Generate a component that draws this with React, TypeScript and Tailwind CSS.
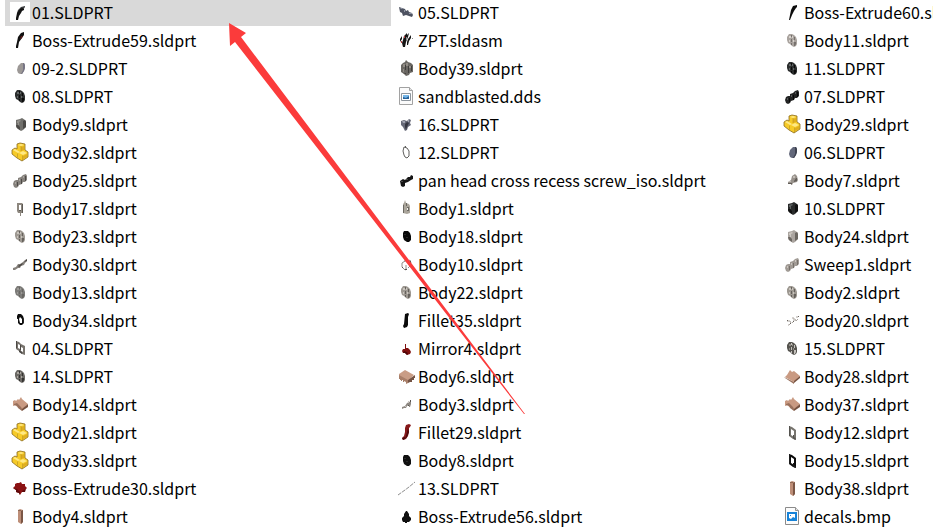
import type { ReactNode } from "react";

type Entry = { name: string; icon: ReactNode; selected?: boolean };

type Shape = [fill: string, d: string];

function Thumb({ shapes }: { shapes: Shape[] }) {
  return (
    <>
      {shapes.map(([fill, d], i) => (
        <path key={i} fill={fill} fillRule="evenodd" d={d} />
      ))}
    </>
  );
}

const blade = (
  <Thumb
    shapes={[
      ["#3c3e40", "M15 4l-4 1-3 3-1 3 3-1 2-2h1l2-3z"],
      ["#141414", "M12 6l-2 1-3 4-1 5v2h2l1-4 2-3 1-2 2-1v-1z"],
    ]}
  />
);
const bladeRed = (
  <Thumb
    shapes={[
      ["#101010", "M14 2l-3 1-3 4-1 5-1 4v2h2l1-6 3-4 2-3z"],
      ["#5a1818", "M11 6h2l-2 3h-1z"],
    ]}
  />
);
const bladeSlim = (
  <Thumb shapes={[["#0c0c0c", "M15 3l-4 1-2 4-1 5-1 5h1l2-5 2-4 2-3 1-1z"]]} />
);

/* A gear or a disc seen at an angle, with a few lighter and darker teeth. */
function Disc({ base, light, dark }: { base: string; light: string; dark: string }) {
  return (
    <Thumb
      shapes={[
        [base, "M7 4h3l2 1 2 2 1 3v4l-1 2-2 1-2-1-2-2-2-1-1-3V7z"],
        [light, "M7 6h2v2H7zM10 6h1v2h-1zM7 10h1v2H7zM11 10h1v2h-1z"],
        [dark, "M9 5h1v2H9zM12 7h1v3h-1zM9 9h1v3H9zM12 12h2v2l-1 2h-1zM9 13h1v2H9z"],
      ]}
    />
  );
}
function Oval({ fill, shade }: { fill: string; shade: string }) {
  return (
    <Thumb
      shapes={[
        [fill, "M11 5h3l1 2v3l-1 3-2 3h-2l-2-1-1-3 1-4z"],
        [shade, "M13 5h1l1 2v3l-1 3-2 3h-1l2-4V9z"],
      ]}
    />
  );
}
function Blob({ fill, hint }: { fill: string; hint: string }) {
  return (
    <Thumb
      shapes={[
        [fill, "M8 5h4l2 2 1 3v4l-2 2h-2l-3-2-1-3V7z"],
        [hint, "M8 8h2v1H8zM10 11h2v1h-2z"],
      ]}
    />
  );
}
function Block({ base, light, dark }: { base: string; light: string; dark: string }) {
  return (
    <Thumb
      shapes={[
        [base, "M6 6l4-1 2-1 3 2 1 1v6l-3 3-2 1-3-2-2-2V9z"],
        [light, "M7 7l3-1 1 1-2 1v3H8V9H7z"],
        [dark, "M13 7l2-1 1 2v5l-3 2zM6 11h2l2 2v3l-3-2z"],
      ]}
    />
  );
}
/* Three short discs stepping up to the right. */
function Coils({ base, light, dark }: { base: string; light: string; dark: string }) {
  return (
    <Thumb
      shapes={[
        [base, "M4 11l2-1h2V8l3-1 1-1 1-1 3-1 1 2v4l-2 2h-2l-1 2-3 1-1 2-2 1-2-1-1-3z"],
        [light, "M5 12h1v2H5zM9 9h1v2H9zM13 6h1v2h-1z"],
        [dark, "M7 12h1v4H7zM11 9h1v5h-1zM15 6h1v5h-1z"],
      ]}
    />
  );
}
function Ring({ fill, edge }: { fill: string; edge: string }) {
  return (
    <Thumb
      shapes={[
        [fill, "M8 4h3l2 2 1 3v4l-2 2h-2l-2-2V9L7 8V6zM10 7l-1 2 1 4h2V9z"],
        [edge, "M7 8h1v1H7zM13 9h1v4h-1z"],
      ]}
    />
  );
}
function Frame({ fill, edge }: { fill: string; edge: string }) {
  return (
    <Thumb
      shapes={[
        [fill, "M7 4l3 1 4 3v10l-3-1-4-3zM9 7v6l3 2V9z"],
        [edge, "M7 4h1v10H7zM11 13h1v2l2 2-1 1-2-2z"],
      ]}
    />
  );
}
const twinFrame = (
  <Thumb
    shapes={[
      ["#77736d", "M6 3l3 1 2 2 4 2v9l-3-1-3-3-3-2zM8 6v4l2 1V7zM11 9v4l2 1v-4z"],
      ["#4d4a46", "M6 3h1v7H6zM10 7h1v5h-1zM9 12l3 2v2l-3-2z"],
    ]}
  />
);
const bracket = (
  <Thumb
    shapes={[
      ["#8d877f", "M7 5h5l1 1v9h-2v3h-1v-3H8l-1-2zM9 7v5h2V7z"],
      ["#5c5954", "M12 6h1v9h-1zM9 12h2v1H9z"],
    ]}
  />
);
const yellowPart = (
  <>
    <path fill="#f6ca27" stroke="#8a6b1e" strokeWidth=".8" strokeLinejoin="round" d="M7 2l3-1 5 1v6l3 2v5l-6 4-5-3-5-4V8l3-2 2 1z" />
    <path fill="#ffe985" d="M8 3l3-1 3 1-3 1zM3 8l2-1 5 3-2 1zM9 11l4-2 4 2-4 2z" />
    <path fill="#dfae20" d="M11 5l3-1v4l-3 1zM13 14l4-2v3l-4 2z" />
    <path fill="none" stroke="#a98527" strokeWidth=".5" d="M11 4v5M12.500 13.500v5M7.500 11.500v4" />
  </>
);
function Plate({ notched }: { notched?: boolean }) {
  return notched ? (
    <Thumb
      shapes={[
        ["#c99a82", "M3 7l2-1 1 1 2-2 1 1 2-3 1 2 6 5-6 6-3-4-2 1-1-2-3 1z"],
        ["#98705c", "M4 10l3-1 1 1 3 3 1 2v2l-4-3-1-2-3-1z"],
        ["#76513f", "M12 15l6-5v3l-6 4z"],
      ]}
    />
  ) : (
    <Thumb
      shapes={[
        ["#c99a82", "M8 4l2 2 2-1 6 5-6 6-9-5 2-2z"],
        ["#98705c", "M2 11l10 5v2l-9-6z"],
        ["#76513f", "M12 15l6-5v2l-6 5z"],
      ]}
    />
  );
}
const comb = (
  <Thumb
    shapes={[
      ["#c99d86", "M3 8l6-4 9 5-6 6-9-4z"],
      ["#a87f69", "M3 9l9 5v3l-2 1v-2l-2-1v1H7v-2H6v1H5v-1H4v-1H3z"],
      ["#745344", "M12 14l7-5v3h-1v2h-2v2h-2l-2 1z"],
    ]}
  />
);
const rod = (
  <Thumb
    shapes={[
      ["#bd8e78", "M8 4l2-1 3 1v12l-2 2-3-2z"],
      ["#7b5645", "M11 5l2-1v12l-2 2z"],
      ["#8f6955", "M8 4h3v1H8z"],
    ]}
  />
);
const redStar = (
  <Thumb
    shapes={[
      ["#8b1213", "M7 5h2l2-1 1 2h3v2l2 2-2 2v2h-3l-2 3-1-2-3-1v-2l-3-2 2-2V6z"],
      ["#5e090b", "M3 10l4 1 3 3v3l-1-2-3-1v-2zM12 13l4-2-1 3h-3z"],
    ]}
  />
);
const redCluster = (
  <Thumb
    shapes={[
      ["#80100f", "M9 6h1v4h2l2 2 1 2-1 2-3 1-2-2H7l-1-2 1-2h2z"],
      ["#4f0708", "M8 13l3 1 1 2-1 1-2-2H7z"],
    ]}
  />
);
const redHook = (
  <Thumb
    shapes={[
      ["#86191a", "M10 3l3-1 2 1-1 2-1 1v4l-1 4-2 3-3 1-1-2 2-2 1-4V6z"],
      ["#4b090b", "M12 6l1 4-2 5-2 2 1-3zM6 16l3-1v2l-2 1z"],
    ]}
  />
);
const blackBar = (
  <Thumb shapes={[["#0b0b0b", "M9 4l3-1 1 1-1 3v8l-1 2-3 1-1-2 1-2z"]]} />
);
const shaft = (
  <Thumb
    shapes={[
      ["#85807b", "M3 14l3-1 2-3h2l3-2 2-2 2-1v2l-2 2-1 2-3 1-1 2H8l-3 2H3z"],
      ["#4b4845", "M8 12l3-2 2-1-1 2-3 2zM14 8l3-3v2z"],
    ]}
  />
);
const screwDown = (
  <Thumb
    shapes={[
      ["#4e5361", "M3 5l3 1 3 1 1 2 2-1 1 2 3 1 1 2-1 2-3-1-3-1-3 1-1-3-2-1z"],
      ["#8c92a2", "M4 6h2l1 1H5zM8 8h1v2H8zM13 11h3v1h-3z"],
    ]}
  />
);
const assembly = (
  <>
    <path fill="#151515" d="M11 3L8 6l-1 4-1 3 1 4h2l1-5 2-5 1-4-2 2zM15 5l-3 4-1 3v3h1l1-4 2-3zM6 6l-2 3v3l2-3z" />
    <path fill="#b53c3c" d="M8 6h1v2H8zM5 11h1v2H5z" />
    <path fill="#888" d="M10 7h1v3h-1zM16 8h1v1h-1z" />
  </>
);
const gearBox = (
  <Thumb
    shapes={[
      ["#6a6762", "M7 5l2-1 1-2 2 2 3 1 2 2v7l-3 1-1 2-3 1-2-2-3-2V7z"],
      ["#918c85", "M7 6h2v3H7zM10 5h2v3h-2zM7 11h1v3H7zM13 8h2v2h-2z"],
      ["#3f3d3b", "M9 7h1v5H9zM12 8h1v7h-1zM15 8h1v5h-1zM7 15h3v1z"],
    ]}
  />
);
const funnel = (
  <Thumb
    shapes={[
      ["#666977", "M5 7l3-1 3 1 2-2 2 1-1 3 1 2-3 2-1 3-2 1-2-4-2-2z"],
      ["#343641", "M9 10l2-2 2 1-2 4-1 3-1-3z"],
      ["#a0a3af", "M6 7h3v2H7zM12 6h1v2h-1z"],
    ]}
  />
);
const panScrew = (
  <Thumb
    shapes={[
      ["#151515", "M4 11l3-2 2 1 3-3h2l1-2 2 1v3l-2 1-3 2-3 1v3l-2 1-2-1z"],
      ["#474747", "M5 11h2v1H5zM10 9h2v1h-2z"],
    ]}
  />
);
const housing = (
  <Thumb
    shapes={[
      ["#aaa59b", "M8 5l1-3 1 3 3 1 1 2v7l-3 1-4-1V6z"],
      ["#6b6861", "M7 7h1v8H7zM10 5h1v3h-1zM11 9h2v4h-2z"],
      ["#f2f0ec", "M11 10h1v2h-1z"],
    ]}
  />
);
const clips = (
  <>
    <path fill="none" stroke="#928e89" d="M9 7l-3 2v4l3 3 2-1M11 8l3-2 1 3M10 11v4M8 7h2M12 14l2-2" />
    <path fill="#57534f" d="M6 13h1v1H6zM9 15h2v1H9zM14 7h1v2h-1z" />
  </>
);
const sprig = (
  <>
    <path fill="#8e8882" d="M6 13l3-1 2-3 4-2v3l-1 3h-1v-2l-2 1-1 2H8l-2 1z" />
    <path fill="#c7c3be" d="M12 7h1v2h-1zM9 12h1v1H9z" />
    <path fill="#59544f" d="M14 6h1v2h-1zM12 11h1v1h-1z" />
  </>
);
const hairline = (
  <path fill="none" stroke="#6f6f6f" strokeWidth=".8" strokeDasharray="4 1" d="M2 17l7-5 4-3 6-5" />
);
const club = (
  <Thumb
    shapes={[["#101010", "M10 5h1l2 3v2l2 2v2l-2 2h-2v1H9v-1H7l-1-2v-2l2-2V8z"]]}
  />
);
const elbow = (
  <Thumb
    shapes={[
      ["#98928c", "M6 12l3-2 1-4 3-2 2 2 1 4-1 2-4 1-1 2H9v-2l-3 1z"],
      ["#c2bcb5", "M11 6h2v2h-2zM7 11h2v1H7z"],
      ["#625d58", "M14 8h1v3l-3 1v-1zM6 13h4v1H6z"],
    ]}
  />
);
const crumbs = (
  <>
    <path fill="none" stroke="#aaa49e" d="M5 11h3l1 2-2 2H6M10 8h2v3l-2 2M14 7h2M13 9l1 2 2-2" />
    <path fill="#67625d" d="M8 13h1v1H8zM11 11h1v1h-1zM16 6h1v1h-1zM5 10h1v1H5z" />
  </>
);
const ddsFile = (
  <>
    <path fill="#fbfbfb" stroke="#a2a2a2" d="M3.5 1.5h10l3 3v14h-13z" />
    <path fill="#e4e4e4" stroke="#a2a2a2" d="M13.5 1.5v3h3" />
    <path fill="#fff" stroke="#8d959c" d="M5.5 7.5h9v7h-9z" />
    <path fill="#75b6e8" d="M7 9h6v4H7z" />
    <path fill="#266299" d="M7 11l3 1 3-2v3H7z" />
  </>
);
const bmpFile = (
  <>
    <path fill="#fcfcfc" stroke="#8b8b8b" d="M3.5 1.5h10l3 3v14h-13z" />
    <path fill="#e4e4e4" stroke="#929292" d="M13.5 1.5v3h3" />
    <path fill="#1783d8" d="M5 6h10v9H5z" />
    <path fill="#fff" d="M7 8h6v4l-2-1-2 2-2-1z" />
    <path fill="#1783d8" d="M8 9h1v1H8z" />
  </>
);

const darkDisc = <Disc base="#2c2e2e" light="#626666" dark="#0b0b0b" />;
const paleDisc = <Disc base="#9e9992" light="#c9c4bd" dark="#65615c" />;

const columns: Entry[][] = [
  [
    { name: "01.SLDPRT", icon: blade, selected: true },
    { name: "Boss-Extrude59.sldprt", icon: bladeRed },
    { name: "09-2.SLDPRT", icon: <Oval fill="#9c9896" shade="#777585" /> },
    { name: "08.SLDPRT", icon: darkDisc },
    { name: "Body9.sldprt", icon: <Block base="#71706c" light="#92908b" dark="#4c4a47" /> },
    { name: "Body32.sldprt", icon: yellowPart },
    { name: "Body25.sldprt", icon: <Coils base="#85817c" light="#aaa6a0" dark="#4d4a47" /> },
    { name: "Body17.sldprt", icon: bracket },
    { name: "Body23.sldprt", icon: paleDisc },
    { name: "Body30.sldprt", icon: shaft },
    { name: "Body13.sldprt", icon: <Disc base="#7d7c79" light="#9c9a96" dark="#686662" /> },
    { name: "Body34.sldprt", icon: <Ring fill="#0d0d0d" edge="#222" /> },
    { name: "04.SLDPRT", icon: twinFrame },
    { name: "14.SLDPRT", icon: <Disc base="#6b6864" light="#aaa69f" dark="#343331" /> },
    { name: "Body14.sldprt", icon: <Plate notched /> },
    { name: "Body21.sldprt", icon: yellowPart },
    { name: "Body33.sldprt", icon: yellowPart },
    { name: "Boss-Extrude30.sldprt", icon: redStar },
    { name: "Body4.sldprt", icon: rod },
  ],
  [
    { name: "05.SLDPRT", icon: screwDown },
    { name: "ZPT.sldasm", icon: assembly },
    { name: "Body39.sldprt", icon: gearBox },
    { name: "sandblasted.dds", icon: ddsFile },
    { name: "16.SLDPRT", icon: funnel },
    { name: "12.SLDPRT", icon: <path fill="none" stroke="#605f5d" d="M8 5l3 1 2 3v5l-2 2-2-1-1-2-1-4zM9 5l1-1" /> },
    { name: "pan head cross recess screw_iso.sldprt", icon: panScrew },
    { name: "Body1.sldprt", icon: housing },
    { name: "Body18.sldprt", icon: <Blob fill="#090909" hint="#252525" /> },
    { name: "Body10.sldprt", icon: clips },
    { name: "Body22.sldprt", icon: paleDisc },
    { name: "Fillet35.sldprt", icon: blackBar },
    { name: "Mirror4.sldprt", icon: redCluster },
    { name: "Body6.sldprt", icon: comb },
    { name: "Body3.sldprt", icon: sprig },
    { name: "Fillet29.sldprt", icon: redHook },
    { name: "Body8.sldprt", icon: <Blob fill="#101010" hint="#292929" /> },
    { name: "13.SLDPRT", icon: hairline },
    { name: "Boss-Extrude56.sldprt", icon: club },
  ],
  [
    { name: "Boss-Extrude60.sldprt", icon: bladeSlim },
    { name: "Body11.sldprt", icon: <Disc base="#aaa49f" light="#d7d2cd" dark="#77726e" /> },
    { name: "11.SLDPRT", icon: darkDisc },
    { name: "07.SLDPRT", icon: <Coils base="#222323" light="#555757" dark="#080808" /> },
    { name: "Body29.sldprt", icon: yellowPart },
    { name: "06.SLDPRT", icon: <Oval fill="#62677a" shade="#3e4250" /> },
    { name: "Body7.sldprt", icon: elbow },
    { name: "10.SLDPRT", icon: <Block base="#292b2b" light="#5d6060" dark="#101010" /> },
    { name: "Body24.sldprt", icon: <Block base="#aaa49f" light="#cbc6c0" dark="#6c6762" /> },
    { name: "Sweep1.sldprt", icon: <Coils base="#a19b95" light="#cbc5bf" dark="#77716b" /> },
    { name: "Body2.sldprt", icon: paleDisc },
    { name: "Body20.sldprt", icon: crumbs },
    { name: "15.SLDPRT", icon: <Disc base="#56544f" light="#8e8b85" dark="#c4c1bc" /> },
    { name: "Body28.sldprt", icon: <Plate /> },
    { name: "Body37.sldprt", icon: <Plate notched /> },
    { name: "Body12.sldprt", icon: <Frame fill="#77746e" edge="#55534f" /> },
    { name: "Body15.sldprt", icon: <Frame fill="#0c0c0c" edge="#1c1c1c" /> },
    { name: "Body38.sldprt", icon: rod },
    { name: "decals.bmp", icon: bmpFile },
  ],
];

function FileRow({ name, icon, selected }: Entry) {
  return (
    <li className={`flex h-7 items-center gap-0.5 pl-[5px] ${selected ? "bg-[#d9d9d9]" : ""}`}>
      <svg viewBox="0 0 20 20" aria-hidden="true" className={`size-5 shrink-0 ${selected ? "bg-white" : ""}`}>
        {icon}
      </svg>
      <span className="whitespace-nowrap">{name}</span>
    </li>
  );
}

export default function App() {
  return (
    <main className="relative overflow-hidden bg-white pl-[5px] font-['Noto_Sans_CJK_SC','Noto_Sans',sans-serif] text-base leading-5 text-black">
      <div className="-mt-0.5 flex">
        {columns.map((entries, i) => (
          <ul key={i} aria-label={`Files, column ${i + 1}`} className="w-[386px] shrink-0">
            {entries.map((entry) => (
              <FileRow key={entry.name} {...entry} />
            ))}
          </ul>
        ))}
      </div>
      <svg
        viewBox="0 0 300 396"
        aria-hidden="true"
        className="pointer-events-none absolute top-5 left-[227px] h-[396px] w-[300px]"
      >
        <path fill="#fb3b3b" d="M2 3l17 10-5 4 284 377h-1L8 22l-5 4z" />
      </svg>
    </main>
  );
}
